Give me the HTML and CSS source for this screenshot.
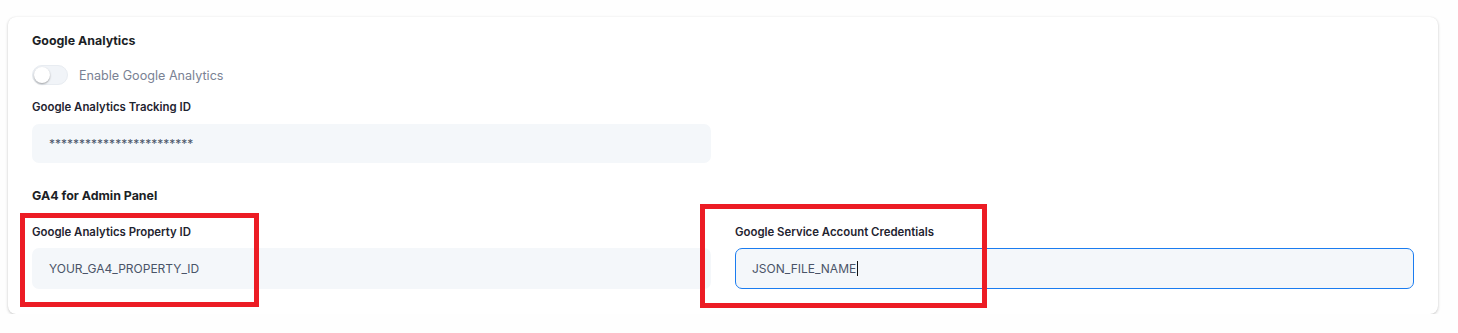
FILE: index.html
```html
<!DOCTYPE html>
<html>
<head>
<meta charset="utf-8">
<link rel="stylesheet" href="styles.css">
</head>
<body>
<div class="card">
  <h3 class="section-title">Google Analytics</h3>
  <div class="toggle-row">
    <span class="toggle"><span class="knob"></span></span>
    <span class="toggle-label">Enable Google Analytics</span>
  </div>
  <div class="field narrow">
    <label class="label">Google Analytics Tracking ID</label>
    <div class="input">************************</div>
  </div>
  <h3 class="section-title ga4">GA4 for Admin Panel</h3>
  <div class="grid">
    <div class="field">
      <label class="label">Google Analytics Property ID</label>
      <div class="input">YOUR_GA4_PROPERTY_ID</div>
    </div>
    <div class="field">
      <label class="label">Google Service Account Credentials</label>
      <div class="input focused">JSON_FILE_NAME<span class="caret"></span></div>
    </div>
  </div>
  <div class="mark mark-left"></div>
  <div class="mark mark-right"></div>
</div>
</body>
</html>
```
FILE: styles.css
```css
* { box-sizing: border-box; }
html, body { margin: 0; background: #fefefe; }
body {
  font-family: "Inter", "Open Sans", sans-serif;
  color: #1f2430;
  padding: 17px 20px 0 8px;
}
.card {
  position: relative;
  background: #fff;
  border-radius: 8px;
  box-shadow: 0 1px 3px rgba(0,0,0,0.22), 0 0 1px rgba(0,0,0,0.06);
  padding: 15px 24px 25px;
  width: 1430px;
}
.section-title {
  margin: 0;
  font-size: 12.4px;
  line-height: 18px;
  font-weight: 700;
  color: #1c1f26;
}
.section-title.ga4 { margin-top: 24px; }
.toggle-row {
  display: flex;
  align-items: center;
  gap: 11px;
  margin-top: 15px;
  height: 20px;
}
.toggle {
  position: relative;
  width: 36px;
  height: 20px;
  border-radius: 10px;
  background: #f1f4f8;
  border: 1px solid #e8ecf1;
}
.knob {
  position: absolute;
  left: 1px;
  top: 1px;
  width: 16px;
  height: 16px;
  border-radius: 50%;
  background: #fff;
  box-shadow: 0 1px 2px rgba(0,0,0,0.35);
}
.toggle-label {
  font-size: 12.6px;
  color: #7a8294;
}
.field.narrow { width: 679px; }
.label {
  display: block;
  margin-top: 14px;
  font-size: 11.4px;
  line-height: 16px;
  font-weight: 600;
  color: #1f2430;
}
.input {
  margin-top: 9px;
  height: 39px;
  display: flex;
  align-items: center;
  padding: 0 16px;
  background: #f4f7fa;
  border: 1px solid transparent;
  border-radius: 7px;
  font-size: 12px;
  color: #4a5468;
}
.grid {
  display: grid;
  grid-template-columns: 1fr 1fr;
  gap: 24px;
}
.grid .label { margin-top: 19px; }
.grid .input { margin-top: 8px; height: 41px; }
.input.focused { border-color: #1a7cf0; }
.caret {
  display: inline-block;
  width: 1px;
  height: 15px;
  background: #111;
  margin-left: 1px;
}
.mark {
  position: absolute;
  border: 5px solid #ec1c24;
}
.mark-left { left: 12px; top: 196px; width: 239px; height: 94px; }
.mark-right { left: 692px; top: 187px; width: 287px; height: 104px; }
```
